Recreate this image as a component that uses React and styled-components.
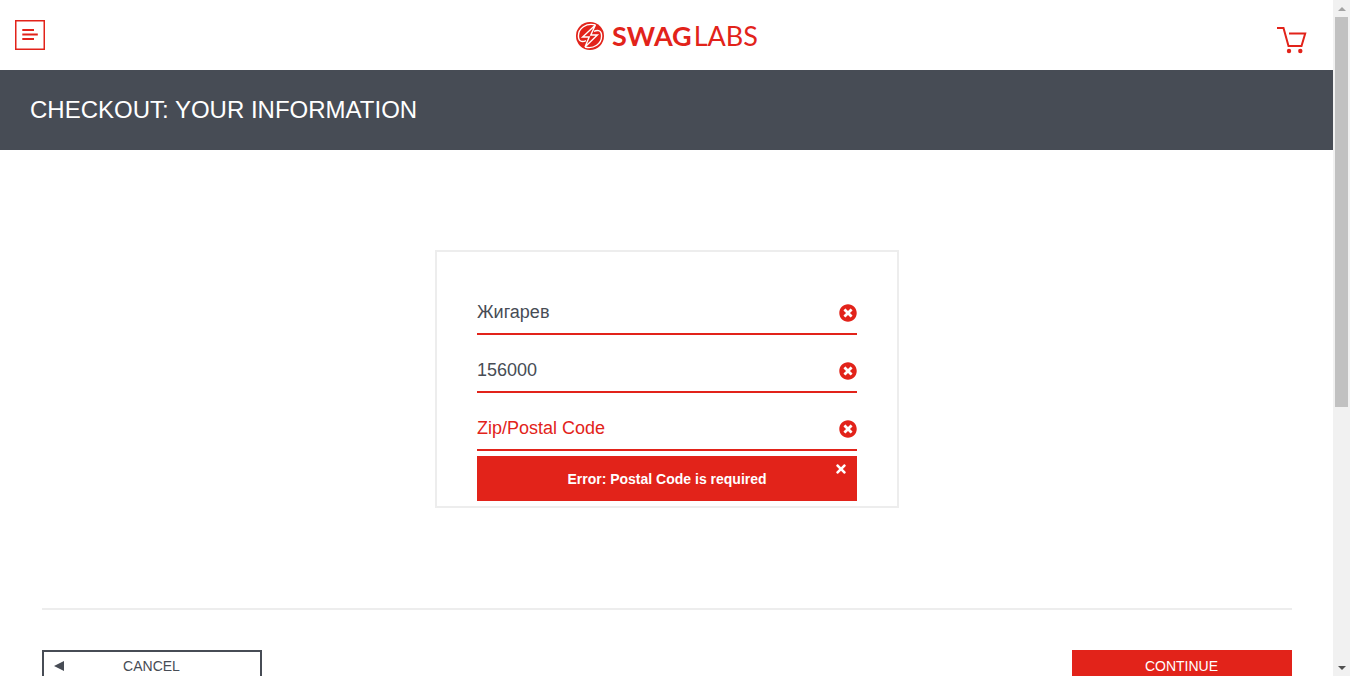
import React, { useState } from "react";
import styled, { createGlobalStyle } from "styled-components";
import { FaTimes, FaTimesCircle } from "react-icons/fa";

const red = "#e2231a";
const slate = "#474c55";
const line = "#ededed";

const GlobalStyle = createGlobalStyle`
  *, *::before, *::after { box-sizing: border-box; }
  body {
    margin: 0;
    background: #fff;
    color: ${slate};
    font-family: Arial, "Liberation Sans", sans-serif;
  }
  button, input { font-family: inherit; }
`;

const Shell = styled.div`
  display: grid;
  grid-template-columns: minmax(0, 1fr) 17px;
  height: 100vh;
  overflow: hidden;
`;

const Page = styled.div`
  min-height: 0;
  overflow-y: auto;
  scrollbar-width: none;
`;

const Header = styled.header`
  display: grid;
  grid-template-columns: 1fr auto 1fr;
  align-items: center;
  height: 70px;
  padding: 0 26px 0 15px;
`;

const IconButton = styled.button`
  display: flex;
  padding: 0;
  border: 0;
  background: none;
  color: ${red};
  cursor: pointer;
`;

const CartLink = styled.a`
  display: flex;
  justify-self: end;
  padding-top: 10px;
  color: ${red};
`;

const Logo = styled.div`
  display: flex;
  align-items: center;
  gap: 8px;
  padding: 2px 0 0 12px;
  color: ${red};
`;

const Wordmark = styled.span`
  display: flex;
  gap: 2px;
  font: 400 27px/28px Lato, sans-serif;
  strong { font-weight: 700; }
`;

const TitleBar = styled.div`
  height: 80px;
  padding: 0 30px;
  background: ${slate};
`;

const Title = styled.h1`
  margin: 0;
  color: #fff;
  font-size: 24px;
  font-weight: 400;
  line-height: 80px;
  text-transform: uppercase;
`;

const Form = styled.form`
  padding: 100px 41px 40px 42px;
`;

const Card = styled.div`
  display: flex;
  flex-direction: column;
  gap: 15px;
  max-width: 464px;
  margin: 0 auto;
  padding: 40px 40px 5px;
  border: 2px solid ${line};
`;

const Field = styled.label`
  display: flex;
  align-items: center;
  height: 43px;
  border-bottom: 2px solid ${red};
  color: ${red};
  svg { flex: none; }
`;

const TextInput = styled.input`
  flex: 1;
  min-width: 0;
  height: 40px;
  padding: 0;
  border: 0;
  outline: 0;
  background: none;
  color: ${slate};
  font-size: 18px;
  &::placeholder { color: ${red}; opacity: 1; }
`;

const ErrorBox = styled.div`
  position: relative;
  margin-top: -10px;
  background: ${red};
  color: #fff;
`;

const ErrorText = styled.h3`
  margin: 0;
  padding-top: 1px;
  font-size: 14px;
  line-height: 44px;
  text-align: center;
`;

const Dismiss = styled(IconButton)`
  position: absolute;
  top: 6px;
  right: 9px;
  color: #fff;
`;

const Actions = styled.div`
  display: flex;
  justify-content: space-between;
  margin-top: 100px;
  padding-top: 40px;
  border-top: 2px solid ${line};
`;

const ActionButton = styled.button`
  display: grid;
  grid-template-columns: 12px 1fr 12px;
  align-items: center;
  width: 220px;
  height: 32px;
  padding: 0 11px 0 10px;
  border: 2px solid ${(p) => (p.$primary ? red : slate)};
  background: ${(p) => (p.$primary ? red : "#fff")};
  color: ${(p) => (p.$primary ? "#fff" : slate)};
  font-size: 14px;
  line-height: 16px;
  text-transform: uppercase;
  cursor: pointer;
`;

const ActionLabel = styled.span`
  grid-column: 2;
  text-align: center;
`;

const Scrollbar = styled.div`
  display: flex;
  flex-direction: column;
  background: #f1f1f1;
`;

const Arrow = styled.div`
  display: flex;
  align-items: center;
  justify-content: center;
  height: 17px;
  color: ${(p) => (p.$muted ? "#a3a3a3" : "#505050")};
`;

const Track = styled.div`
  display: grid;
  flex: 1;
  grid-template-rows: 65fr 42fr;
  padding: 0 2px;
`;

const Thumb = styled.div`
  background: #c1c1c1;
`;

function MenuIcon() {
  return (
    <svg width="30" height="30" viewBox="0 0 30 30" fill="none" stroke="currentColor" aria-hidden="true">
      <rect x="0.75" y="0.75" width="28.5" height="28.5" strokeWidth="1.5" />
      <path d="M7.3 10H19M7.3 14.5H22.8M7.3 19H19" strokeWidth="1.9" />
    </svg>
  );
}

function BoltMark() {
  return (
    <svg width="28" height="28" viewBox="0 0 28 28" aria-hidden="true">
      <circle cx="14" cy="14" r="14" fill="currentColor" />
      <g fill="none" stroke="#fff" strokeWidth="1.4" strokeLinejoin="miter">
        <path d="M19.4 3L6.6 15H13.2L9 25L21.4 13H14.8Z" />
        <path d="M19.4 3C10 .6 2.4 6.4 2.4 14C2.4 16.6 3.6 18.8 5.4 19.4C7 19.8 8.4 19.4 10 18.6" />
        <path d="M9 25C18 27.4 25.6 21.6 25.6 14C25.6 11.4 24.4 9.2 22.6 8.6C21 8.2 19.6 8.6 18 9.4" />
      </g>
    </svg>
  );
}

function CartIcon() {
  return (
    <svg width="30" height="28" viewBox="0 0 30 28" fill="none" stroke="currentColor" strokeWidth="2" aria-hidden="true">
      <path d="M0 2H6.5L11.5 20H24.5L28.2 7.5H12" />
      <circle cx="12" cy="25" r="2.2" fill="currentColor" stroke="none" />
      <circle cx="23.3" cy="25" r="2.2" fill="currentColor" stroke="none" />
    </svg>
  );
}

function Triangle({ points, size = 8 }) {
  return (
    <svg width={size} height={size} viewBox="0 0 8 8" aria-hidden="true">
      <polygon points={points} fill="currentColor" />
    </svg>
  );
}

const fields = [
  { name: "First Name", value: "Жигарев" },
  { name: "Last Name", value: "156000" },
  { name: "Zip/Postal Code", value: "" },
];

export default function App() {
  const [error, setError] = useState("Error: Postal Code is required");
  return (
    <>
      <GlobalStyle />
      <Shell>
        <Page>
          <Header>
            <IconButton type="button" aria-label="Open Menu"><MenuIcon /></IconButton>
            <Logo>
              <BoltMark />
              <Wordmark><strong>SWAG</strong>LABS</Wordmark>
            </Logo>
            <CartLink href="#cart" aria-label="Cart"><CartIcon /></CartLink>
          </Header>
          <TitleBar><Title>Checkout: Your Information</Title></TitleBar>
          <Form onSubmit={(e) => e.preventDefault()}>
            <Card>
              {fields.map((f) => (
                <Field key={f.name}>
                  <TextInput type="text" aria-label={f.name} placeholder={f.name} defaultValue={f.value} spellCheck={false} />
                  <FaTimesCircle size={18} aria-hidden="true" />
                </Field>
              ))}
              {error && (
                <ErrorBox role="alert">
                  <ErrorText>{error}</ErrorText>
                  <Dismiss type="button" aria-label="Dismiss error" onClick={() => setError("")}><FaTimes size={14} /></Dismiss>
                </ErrorBox>
              )}
            </Card>
            <Actions>
              <ActionButton type="button">
                <Triangle points="0,4 8,0 8,8" size={10} />
                <ActionLabel>Cancel</ActionLabel>
              </ActionButton>
              <ActionButton type="submit" $primary><ActionLabel>Continue</ActionLabel></ActionButton>
            </Actions>
          </Form>
        </Page>
        <Scrollbar aria-hidden="true">
          <Arrow $muted><Triangle points="0,6 4,2 8,6" /></Arrow>
          <Track><Thumb /></Track>
          <Arrow><Triangle points="0,2 8,2 4,6" /></Arrow>
        </Scrollbar>
      </Shell>
    </>
  );
}
